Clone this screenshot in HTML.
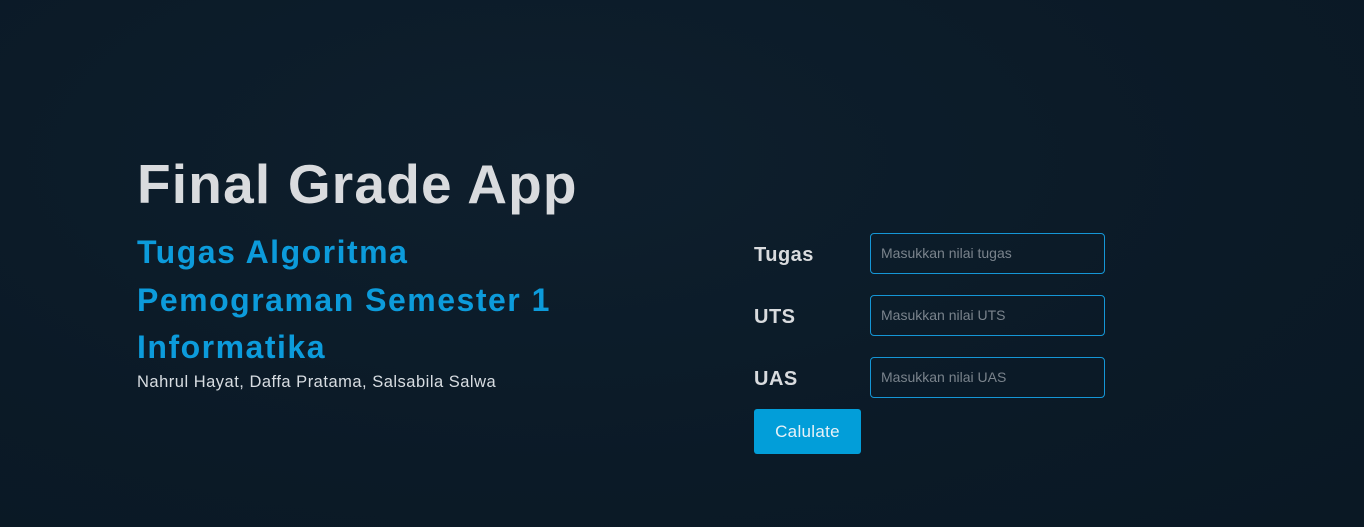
<!DOCTYPE html>
<html><head><style>
body{margin:0;width:1364px;height:527px;background:radial-gradient(ellipse at 40% 30%,#0e1f2d 0%,#0b1a27 60%,#0a1824 100%);font-family:"Liberation Sans",sans-serif;overflow:hidden;position:relative}
.t{position:absolute;left:137px;top:152px;font-size:55px;font-weight:bold;color:#d9dbde;white-space:nowrap;letter-spacing:1.2px}
.s{position:absolute;left:137px;top:229px;font-size:32px;font-weight:bold;color:#0c9bdb;line-height:47.5px;letter-spacing:1.5px;white-space:nowrap}
.n{position:absolute;left:137px;top:373px;font-size:16.5px;color:#d8dde2;letter-spacing:0.5px}
.l{position:absolute;left:754px;font-size:20px;font-weight:bold;color:#d9dbde;letter-spacing:0.5px}
.i{position:absolute;left:870px;width:235px;height:41px;border:1px solid #1596d6;border-radius:4px;box-sizing:border-box}
.i span{position:absolute;left:10px;top:11px;font-size:14px;color:#7a838c}
.b{position:absolute;left:754px;top:409px;width:107px;height:45px;background:#029ed9;border-radius:3px;color:#e8f2f8;font-size:17px;text-align:center;line-height:45px;letter-spacing:0.3px}
</style></head><body>
<div class="t">Final Grade App</div>
<div class="s">Tugas Algoritma<br>Pemograman Semester 1<br>Informatika</div>
<div class="n">Nahrul Hayat, Daffa Pratama, Salsabila Salwa</div>
<div class="l" style="top:244px">Tugas</div>
<div class="l" style="top:306px">UTS</div>
<div class="l" style="top:368px">UAS</div>
<div class="i" style="top:233px"><span>Masukkan nilai tugas</span></div>
<div class="i" style="top:295px"><span>Masukkan nilai UTS</span></div>
<div class="i" style="top:357px"><span>Masukkan nilai UAS</span></div>
<div class="b">Calulate</div>
</body></html>
